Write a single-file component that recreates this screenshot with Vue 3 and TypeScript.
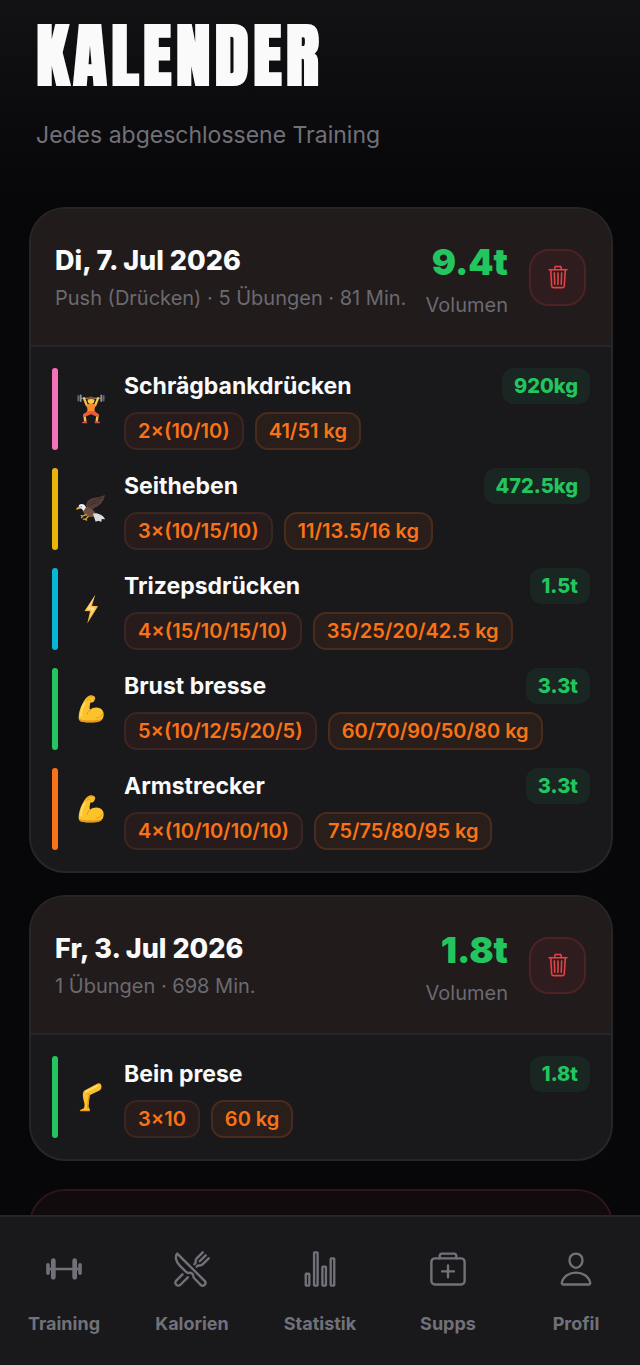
<script setup lang="ts">
interface Exercise {
  name: string
  icon: 'lifter' | 'eagle' | 'bolt' | 'biceps' | 'leg'
  color: 'pink' | 'yellow' | 'cyan' | 'green' | 'orange'
  sets: string
  weight: string
  volume: string
}

interface Workout {
  date: string
  info: string
  volume: string
  exercises: Exercise[]
}

const workouts: Workout[] = [
  {
    date: 'Di, 7. Jul 2026',
    info: 'Push (Drücken) · 5 Übungen · 81 Min.',
    volume: '9.4t',
    exercises: [
      { name: 'Schrägbankdrücken', icon: 'lifter', color: 'pink', sets: '2×(10/10)', weight: '41/51 kg', volume: '920kg' },
      { name: 'Seitheben', icon: 'eagle', color: 'yellow', sets: '3×(10/15/10)', weight: '11/13.5/16 kg', volume: '472.5kg' },
      { name: 'Trizepsdrücken', icon: 'bolt', color: 'cyan', sets: '4×(15/10/15/10)', weight: '35/25/20/42.5 kg', volume: '1.5t' },
      { name: 'Brust bresse', icon: 'biceps', color: 'green', sets: '5×(10/12/5/20/5)', weight: '60/70/90/50/80 kg', volume: '3.3t' },
      { name: 'Armstrecker', icon: 'biceps', color: 'orange', sets: '4×(10/10/10/10)', weight: '75/75/80/95 kg', volume: '3.3t' },
    ],
  },
  {
    date: 'Fr, 3. Jul 2026',
    info: '1 Übungen · 698 Min.',
    volume: '1.8t',
    exercises: [
      { name: 'Bein prese', icon: 'leg', color: 'green', sets: '3×10', weight: '60 kg', volume: '1.8t' },
    ],
  },
]

const tabs: { label: string; paths: string[] }[] = [
  {
    label: 'Training',
    paths: [
      'M48 256h416',
      'M400 128a16 16 0 0116 16v224a16 16 0 01-32 0V144a16 16 0 0116-16z',
      'M112 128a16 16 0 0116 16v224a16 16 0 01-32 0V144a16 16 0 0116-16z',
      'M40 192a8 8 0 018 8v112a8 8 0 01-16 0V200a8 8 0 018-8z',
      'M472 192a8 8 0 018 8v112a8 8 0 01-16 0V200a8 8 0 018-8z',
    ],
  },
  {
    label: 'Kalorien',
    paths: [
      'M57.49 47.74l368.43 368.43a37.28 37.28 0 010 52.72h0a37.29 37.29 0 01-52.72 0l-90-91.55a32 32 0 01-9.2-22.43v-5.53a32 32 0 00-9.52-22.78l-11.62-10.73a32 32 0 00-29.8-7.44h0a48.53 48.53 0 01-46.56-12.63l-85.43-85.44C40.39 159.68 21.74 83.15 57.49 47.74z',
      'M400 32l-77.25 77.25A64 64 0 00304 154.51v14.86a16 16 0 01-4.69 11.32L288 192M320 224l11.31-11.31a16 16 0 0111.32-4.69h14.86a64 64 0 0045.26-18.75L480 112M440 72l-80 80M200 368l-99.72 100.28a40 40 0 01-56.56 0h0a40 40 0 010-56.56L128 328',
    ],
  },
  {
    label: 'Statistik',
    paths: [
      'M72 320h32a8 8 0 018 8v144a8 8 0 01-8 8H72a8 8 0 01-8-8V328a8 8 0 018-8z',
      'M184 32h32a8 8 0 018 8v432a8 8 0 01-8 8h-32a8 8 0 01-8-8V40a8 8 0 018-8z',
      'M296 224h32a8 8 0 018 8v240a8 8 0 01-8 8h-32a8 8 0 01-8-8V232a8 8 0 018-8z',
      'M408 112h32a8 8 0 018 8v352a8 8 0 01-8 8h-32a8 8 0 01-8-8V120a8 8 0 018-8z',
    ],
  },
  {
    label: 'Supps',
    paths: [
      'M80 112h352a48 48 0 0148 48v256a48 48 0 01-48 48H80a48 48 0 01-48-48V160a48 48 0 0148-48z',
      'M144 112V80a32 32 0 0132-32h160a32 32 0 0132 32v32M256 208v160M336 288H176',
    ],
  },
  {
    label: 'Profil',
    paths: [
      'M344 144c-3.92 52.87-44 96-88 96s-84.15-43.12-88-96c-4-55 35-96 88-96s92 42 88 96z',
      'M256 304c-87 0-175.3 48-191.64 138.6C62.39 453.52 68.57 464 80 464h352c11.44 0 17.62-10.48 15.65-21.4C431.3 352 343 304 256 304z',
    ],
  },
]
</script>

<template>
  <div class="app">
    <main class="content">
      <header class="page-head">
        <h1>KALENDER</h1>
        <p>Jedes abgeschlossene Training</p>
      </header>

      <section class="list">
        <article v-for="workout in workouts" :key="workout.date" class="card">
          <div class="card-head">
            <div class="when">
              <h2>{{ workout.date }}</h2>
              <p>{{ workout.info }}</p>
            </div>
            <div class="total">
              <strong>{{ workout.volume }}</strong>
              <span>Volumen</span>
            </div>
            <button type="button" class="delete" aria-label="Training löschen">
              <svg viewBox="0 0 512 512" aria-hidden="true">
                <path d="M112 112l20 320c.95 18.49 14.4 32 32 32h184c17.67 0 30.87-13.51 32-32l20-320M80 112h352" />
                <path d="M192 112V72h0a23.93 23.93 0 0124-24h80a23.93 23.93 0 0124 24h0v40M256 176v224M184 176l8 224M328 176l-8 224" />
              </svg>
            </button>
          </div>

          <ul class="rows">
            <li v-for="ex in workout.exercises" :key="ex.name" class="row">
              <span class="bar" :class="ex.color"></span>
              <svg class="emoji" viewBox="0 0 32 32" aria-hidden="true">
                <g v-if="ex.icon === 'lifter'">
                  <path d="M4 4.500h24" stroke="#a9adb5" stroke-width="1" />
                  <path d="M2.500 2v5M29.500 2v5" stroke="#60646c" stroke-width="2" stroke-linecap="round" />
                  <path d="M5 1.500v6M27 1.500v6" stroke="#8b9099" stroke-width="2" stroke-linecap="round" />
                  <path d="M8.500 4.500l3 7.500 2.500 1.500M23.500 4.500l-3 7.500-2.500 1.500" fill="none" stroke="#f7c548" stroke-width="2.400" stroke-linecap="round" stroke-linejoin="round" />
                  <circle cx="16" cy="7" r="3.600" fill="#f8ca4c" />
                  <path d="M12.400 6.500c0-5 7.200-5 7.200 0-2-1.600-5-1.600-7.200 0z" fill="#875426" />
                  <path d="M11 11.500l3-1h4l3 1-1.200 4.500.4 5h-8.400l.4-5z" fill="#f58a32" />
                  <path d="M12 21l-3 1.500 1 7M20 21l3 1.500-1 7" fill="none" stroke="#f7bd45" stroke-width="2.600" stroke-linejoin="round" />
                  <path d="M12 18.500h8l4.500 3.500-1.500 2.500-7-3-7 3L7.500 22z" fill="#ed5a35" />
                  <path d="M7.500 30.300h3.600M20.900 30.300h3.600" stroke="#dc4d60" stroke-width="1.800" stroke-linecap="round" />
                </g>
                <g v-else-if="ex.icon === 'eagle'">
                  <path d="M10.500 13C12 4 18 4.500 24 3.500L31 1c-.5 3-2 4-2 4l1 .5c-1 2-3 3-3 3l1 .4c-2 2.600-4 2.800-4 2.800l.6.600c-2.600 2-5 1.800-6.600 4.200z" fill="#553d38" />
                  <path d="M13 11c3-4 9-4 15-7M14 13c3-3 7-3 11-5" stroke="#35292a" stroke-width="1" fill="none" />
                  <path d="M6 13c3 1 9 0 12 4 2 2.500 4 4 5 5.500-3 2.500-8 2.500-11 1.500-3-1-5-5-6-11z" fill="#705044" />
                  <path d="M18 21l4-.5c4 1 8 3 9 6.500l-3.500-.3-.5 3-3.500-1.200-2.500 1z" fill="#d9dde1" />
                  <path d="M3 12c3-2.500 7-1 7.500 2.500L8 18c-1-2-2-3-5-2.500z" fill="#eef0f2" />
                  <path d="M4 13L.5 15v2l4-1.800z" fill="#f2b61e" />
                  <circle cx="5.500" cy="13.600" r=".6" fill="#2a2423" />
                  <path d="M11 22l-4 1.500-1.500-.5M13 24l-3 3-2-.3M7 23.500l-1 1.800M10 27l1.500.8" stroke="#dda22b" stroke-width="1.400" fill="none" stroke-linecap="round" />
                </g>
                <g v-else-if="ex.icon === 'bolt'">
                  <path d="M20.500 1L9 18l6 .5L12 31.500 23.500 13l-6.500-.6z" fill="#f9b84a" />
                  <path d="M20.500 1l-9.300 15.500 6 .2-2.600 8L21 14.500l-6.500-.6z" fill="#fde08a" />
                </g>
                <g v-else-if="ex.icon === 'biceps'">
                  <path d="M11 4c2-2 4-3 6-2.500 2 0 4 1.500 3.500 3.500L19 8c-.6 1-2 1.300-3.500.8-.7 3.200-1.500 5.500-.5 8 4-3.500 11-3 13.500 1 2.400 4 .5 10-3.500 11.300-5 1.400-14 1.500-19 .2-3.200-.8-3.500-3.500-3-7C3.800 16 7 9 11 4z" fill="#fcc32c" />
                  <path d="M11.500 5c2-2 4-2.500 6-2 1.500.4 2 1.500 1.500 2.500M12 6.500c2-1.600 3.500-1 4 .5" fill="none" stroke="#e89a1c" stroke-width="1" stroke-linecap="round" />
                  <path d="M15 17c-1.700 1-2.800 2.600-3 4.500M22 25.500c3-.2 5-1.500 6-4" fill="none" stroke="#e9a11e" stroke-width="1.200" stroke-linecap="round" />
                  <path d="M9 10c-2.500 4-3.500 8-3.500 13" fill="none" stroke="#ffdc68" stroke-width="2" stroke-linecap="round" />
                  <path d="M3.500 26c2 2.500 14 2.500 20.500 1.500 2-.3 3.500-1 4.500-2-1 2.500-2.500 3.500-4.500 4-5 1.200-13 1.200-18 .2-1.500-.4-2.400-1.700-2.500-3.700z" fill="#e79a1a" />
                </g>
                <g v-else>
                  <path d="M22 2c2.500-1.500 4.500-.5 5 1.500.5 2.500 0 4.500-2 5.500l-10.500 5c-.5 3-.3 5-.8 8l-.5 4c.5 1.500 1.800 2.600 1.600 4-.1.700-1 1-2 1H6c-2 0-2.500-1-1-1.500l3-1.200c1.200-1.200 1.200-3 1-5-.5-3-2-7-1.700-10C7.500 11 8 9.500 10 8.500z" fill="#fbc02d" />
                  <path d="M14.500 14c-.5-1-1.500-1.500-2-1.500M14 15c-1 5-1.500 9-1.500 13M5 30.600h9" fill="none" stroke="#df9420" stroke-width="1.200" stroke-linecap="round" />
                  <path d="M10.500 10.500L23 4" stroke="#ffdf70" stroke-width="1.600" stroke-linecap="round" />
                </g>
              </svg>
              <div class="body">
                <div class="top">
                  <h3>{{ ex.name }}</h3>
                  <span class="volume">{{ ex.volume }}</span>
                </div>
                <div class="chips">
                  <span class="chip">{{ ex.sets }}</span>
                  <span class="chip weight">{{ ex.weight }}</span>
                </div>
              </div>
            </li>
          </ul>
        </article>
      </section>

      <div class="danger"></div>
    </main>

    <nav class="tabs">
      <a v-for="tab in tabs" :key="tab.label" href="#" class="tab">
        <svg viewBox="0 0 512 512" aria-hidden="true">
          <path v-for="d in tab.paths" :key="d" :d="d" />
        </svg>
        <span>{{ tab.label }}</span>
      </a>
    </nav>
  </div>
</template>

<style>
body {
  margin: 0;
  background: #070709;
}
</style>

<style scoped>
.app {
  display: flex;
  flex-direction: column;
  height: 100vh;
  background: linear-gradient(#121214, #070709 190px);
  color: #fafafa;
  font-family: Inter, "Liberation Sans", sans-serif;
}
h1,
h2,
h3,
p,
ul {
  margin: 0;
  padding: 0;
}
.content {
  flex: 1;
  min-height: 0;
  overflow-y: auto;
  scrollbar-width: none;
}
.page-head {
  padding: 17px 36px 56px;
}
h1 {
  font-family: Anton, Impact, "Liberation Sans Narrow", "DejaVu Sans Condensed", sans-serif;
  font-size: 70px;
  font-weight: 700;
  line-height: 78px;
  letter-spacing: 4px;
}
.page-head p {
  margin-top: 24px;
  font-size: 23px;
  line-height: 32px;
  color: #71717a;
}
.list {
  display: flex;
  flex-direction: column;
  gap: 22px;
  padding: 0 27px 0 29px;
}
.card {
  overflow: hidden;
  border: 2px solid #262629;
  border-radius: 36px;
  background: #19191b;
}
.card-head {
  display: flex;
  align-items: center;
  padding: 28px 25px 28px 24px;
  border-bottom: 2px solid #262629;
  background: #211b1b;
}
.when {
  flex: 1;
  min-width: 0;
}
h2 {
  font-size: 27px;
  font-weight: 800;
  line-height: 40px;
}
.when p {
  margin-top: 2px;
  font-size: 20px;
  line-height: 30px;
  color: #6b6a71;
  white-space: nowrap;
}
.total {
  display: flex;
  flex-direction: column;
  align-items: flex-end;
}
.total strong {
  font-size: 36px;
  font-weight: 900;
  line-height: 50px;
  color: #22c55e;
}
.total span {
  margin-top: 6px;
  font-size: 20px;
  line-height: 24px;
  color: #6b6a71;
}
.delete {
  display: grid;
  place-items: center;
  width: 57px;
  height: 57px;
  margin-left: 21px;
  padding: 0;
  border: 2px solid #4c2225;
  border-radius: 20px;
  background: #2f1c1e;
  color: #e04345;
}
.delete svg {
  width: 26px;
  height: 26px;
}
.delete path,
.tab path {
  fill: none;
  stroke: currentColor;
  stroke-width: 32;
  stroke-linecap: round;
  stroke-linejoin: round;
}
.rows {
  display: flex;
  flex-direction: column;
  gap: 18px;
  padding: 21px;
  list-style: none;
}
.row {
  display: flex;
  align-items: center;
}
.bar {
  align-self: stretch;
  width: 6px;
  border-radius: 3px;
}
.pink { background: #f472b6; }
.yellow { background: #eab308; }
.cyan { background: #06b6d4; }
.green { background: #22c55e; }
.orange { background: #f97316; }
.emoji {
  width: 30px;
  height: 30px;
  margin: 0 18px;
}
.body {
  flex: 1;
  min-width: 0;
}
.top {
  display: flex;
  align-items: center;
  justify-content: space-between;
}
h3 {
  font-size: 23px;
  font-weight: 700;
  line-height: 36px;
}
.volume {
  padding: 0 12px;
  border-radius: 12px;
  background: #1a2622;
  color: #22c55e;
  font-size: 20px;
  font-weight: 800;
  line-height: 36px;
}
.chips {
  display: flex;
  gap: 11px;
  margin-top: 8px;
}
.chip {
  padding: 0 12px;
  border: 2px solid #3a2622;
  border-radius: 13px;
  background: #271c1b;
  color: #f97316;
  font-size: 20px;
  font-weight: 600;
  line-height: 34px;
}
.chip.weight {
  border-color: #4a2c1c;
  background: #2a1e1a;
}
.danger {
  height: 120px;
  margin: 28px 27px 0 29px;
  border: 2px solid #2e1517;
  border-radius: 36px;
  background: #120b0d;
}
.tabs {
  display: grid;
  grid-template-columns: repeat(5, 1fr);
  padding: 33px 0 29px;
  border-top: 2px solid #262629;
  background: #19191b;
}
.tab {
  display: flex;
  flex-direction: column;
  align-items: center;
  gap: 24px;
  color: #71717a;
  text-decoration: none;
  font-size: 18px;
  font-weight: 700;
  line-height: 24px;
}
.tab svg {
  width: 38px;
  height: 38px;
}
</style>
